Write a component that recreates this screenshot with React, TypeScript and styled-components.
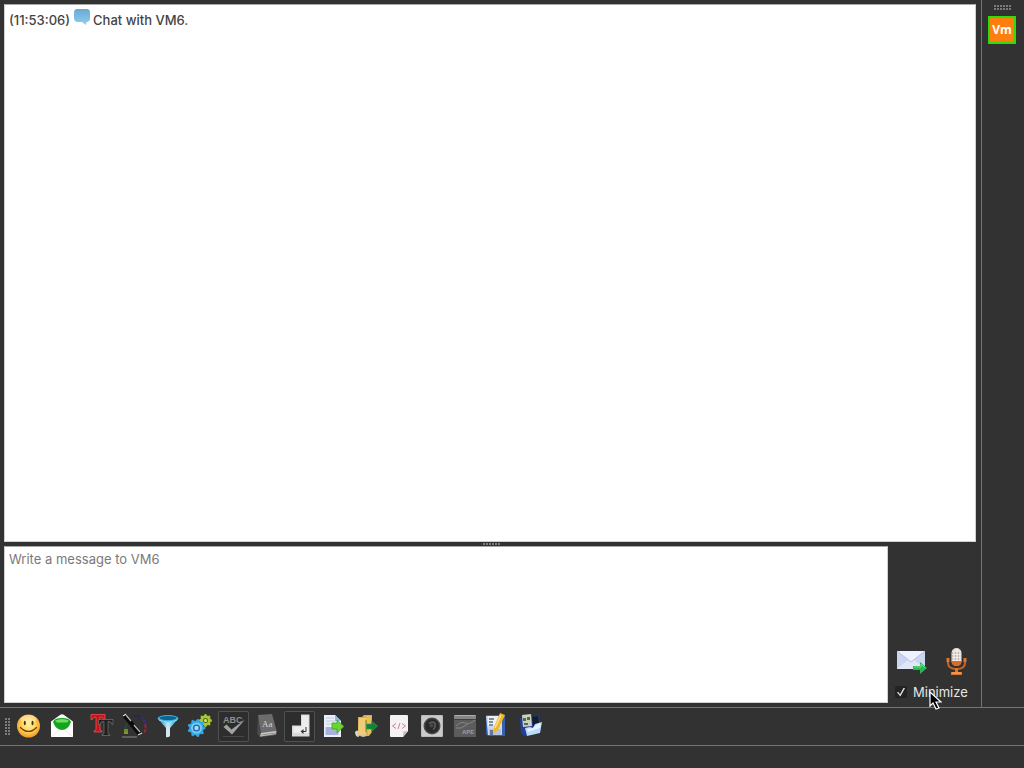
import React from "react";
import styled, { createGlobalStyle } from "styled-components";

const GlobalStyle = createGlobalStyle`
  * { box-sizing: border-box; }
  body {
    margin: 0;
    background: #323232;
    font-family: Inter, "Liberation Sans", sans-serif;
    font-size: 13px;
    line-height: 16px;
  }
`;

const Window = styled.div`
  display: flex;
  flex-direction: column;
  min-height: 100vh;
`;

const Body = styled.div`
  display: flex;
  flex: 1;
`;

const Conversation = styled.main`
  display: flex;
  flex-direction: column;
  flex: 1;
  min-width: 0;
  padding: 4px 5px 4px 4px;
`;

const ChatLog = styled.section`
  flex: 1;
  padding: 4px;
  background: #fff;
  border: 1px solid #cfcfcf;
  border-top-color: #a8a8a8;
  color: #444;
  font-weight: 500;
`;

const LogLine = styled.p`
  display: flex;
  align-items: center;
  margin: 0;
  height: 22px;
  white-space: pre;
`;

const Bubble = styled.svg`
  width: 16px;
  height: 16px;
  margin: 0 3px 6px 4px;
`;

const Splitter = styled.div`
  display: flex;
  justify-content: center;
  align-items: center;
  height: 4px;
  padding-left: 4px;
`;

const Composer = styled.form`
  display: flex;
  height: 157px;
`;

const MessageBox = styled.textarea`
  flex: 1;
  min-width: 0;
  padding: 4px;
  border: 1px solid #cfcfcf;
  border-top-color: #a8a8a8;
  border-radius: 0;
  outline: none;
  resize: none;
  background: #fff;
  color: #3a3a3a;
  font: inherit;
  &::placeholder { color: #7a7a7a; opacity: 1; }
`;

const Actions = styled.div`
  display: flex;
  flex-direction: column;
  justify-content: flex-end;
  width: 88px;
  padding: 0 0 1px 7px;
`;

const SendRow = styled.div`
  display: flex;
  gap: 14px;
`;

const PlainButton = styled.button`
  display: block;
  padding: 0;
  border: 0;
  background: none;
  svg { display: block; }
`;

const MinimizeLabel = styled.label`
  display: flex;
  align-items: center;
  gap: 6px;
  height: 20px;
  margin-top: 5px;
  color: #e6e6e6;
  position: relative;
`;

const Tick = styled.input`
  appearance: none;
  display: grid;
  place-items: center;
  width: 12px;
  height: 12px;
  margin: 0;
  border-radius: 2px;
  background: #232323;
  &:checked::before {
    content: "";
    width: 8px;
    height: 9px;
    background: #ddd;
    clip-path: polygon(0 56%, 14% 46%, 38% 76%, 84% 0, 100% 8%, 42% 100%);
  }
`;

const Pointer = styled.svg`
  position: absolute;
  left: 33px;
  top: 9px;
  width: 14px;
  height: 20px;
  pointer-events: none;
`;

const Contacts = styled.aside`
  display: flex;
  flex-direction: column;
  align-items: center;
  gap: 5px;
  width: 43px;
  padding-top: 5px;
  border-left: 1px solid #757575;
`;

const ContactTab = styled.button`
  width: 28px;
  height: 28px;
  margin-right: 2px;
  padding: 0;
  border: 2px solid #2fdc0a;
  background: #ff7f0e;
  color: #fff;
  font: 700 12px/22px "Open Sans", sans-serif;
`;

const Toolbar = styled.nav`
  display: flex;
  align-items: center;
  gap: 2px;
  height: 39px;
  padding-left: 5px;
  border-top: 1px solid #757575;
  border-bottom: 1px solid #757575;
`;

const Tool = styled.button<{ $active?: boolean; $group?: boolean }>`
  flex: none;
  width: 31px;
  height: 31px;
  margin-left: ${(p) => (p.$group ? 7 : 0)}px;
  padding: 0;
  border: 0;
  border-radius: 2px;
  background: ${(p) => (p.$active ? "#2d2d2d" : "none")};
  box-shadow: ${(p) => (p.$active ? "inset 0 0 0 1px #505050" : "none")};
  svg { display: block; width: 31px; height: 31px; }
`;

const StatusBar = styled.footer`
  height: 22px;
`;

function Grip({ cols, rows }: { cols: number; rows: number }) {
  return (
    <svg width={cols * 3} height={rows * 3} aria-hidden="true">
      {Array.from({ length: cols * rows }, (_, i) => (
        <rect key={i} x={(i % cols) * 3} y={Math.floor(i / cols) * 3} width="2" height="2" fill="#7c7c7c" />
      ))}
    </svg>
  );
}

const gear = (cx: number, cy: number, r: number, teeth: number) =>
  Array.from({ length: teeth * 4 }, (_, i) => {
    const a = ((i - 0.5) / (teeth * 4)) * Math.PI * 2;
    const d = i % 4 < 2 ? r : r * 0.8;
    return `${cx + Math.cos(a) * d},${cy + Math.sin(a) * d}`;
  }).join(" ");

const Smile = () => (
  <svg viewBox="0 0 31 31">
    <defs>
      <radialGradient id="face" cx="50%" cy="45%" r="55%">
        <stop offset="0" stopColor="#fff3a0" />
        <stop offset=".55" stopColor="#ffd45a" />
        <stop offset="1" stopColor="#f29a22" />
      </radialGradient>
    </defs>
    <circle cx="15.5" cy="15" r="11.5" fill="url(#face)" />
    <ellipse cx="15.5" cy="8" rx="8" ry="4" fill="#fff" opacity=".35" />
    <ellipse cx="11.8" cy="12" rx="1" ry="2.2" fill="#4a2d08" />
    <ellipse cx="19.5" cy="12" rx="1" ry="2.2" fill="#4a2d08" />
    <path d="M7.5 16.500q8 8 16 0" fill="none" stroke="#6b3d0a" strokeWidth="1.200" strokeLinecap="round" />
  </svg>
);

const OpenMail = () => (
  <svg viewBox="0 0 31 31">
    <path d="M5 10.500 14 4q2-1.500 4 0l9 6.500V26H5z" fill="#fff" />
    <path d="M7 11q1-4 9-4t9 4q-3 8-9 8t-9-8" fill="#14a51e" />
    <path d="M9 9.500q7-3 14 0l-2 2H11z" fill="#6fdc62" />
    <path d="m5 26 8-7m14 7-8-7" stroke="#e4eae4" fill="none" />
  </svg>
);

const Fonts = () => (
  <svg viewBox="0 0 31 31">
    <path d="M5 3.500h14v5h-1.500q-.5-2.500-3-2.500H14v12q0 2 2 2v1H8v-1q2 0 2-2V6h-.5Q7 6 6.500 8.500H5z" fill="#c3141c" stroke="#ff5656" strokeWidth=".7" />
    <path d="M12.500 8.500h14.500v5h-1q-.5-3-3-3h-1v11.500q0 1.500 2 1.500v1h-8v-1q2 0 2-1.500V10.500h-1q-2.500 0-3 3h-1.500z" fill="#202020" stroke="#767676" strokeWidth=".7" />
  </svg>
);

const Wand = () => (
  <svg viewBox="0 0 31 31">
    <path d="M3 26h15" stroke="#8a8a8a" />
    <path d="M15 5q4-1 7 2" stroke="#29294a" strokeWidth="2" fill="none" />
    <path d="M22 6q3 2 4 6" stroke="#3d2a80" strokeWidth="2" fill="none" strokeDasharray="3 1" />
    <path d="M26 13q2 5-1 9" stroke="#a01f3f" strokeWidth="2" fill="none" strokeDasharray="4 1" />
    <path d="M8 12 6 18" stroke="#2c4a2a" strokeWidth="2" />
    <path d="M5 18h4v3H5z" fill="#4c9e2e" />
    <path d="M5 21h4v2H5z" fill="#a0882a" />
    <path d="m6 5 14 17" stroke="#0c0c0c" strokeWidth="4.500" strokeLinecap="round" />
    <path d="m7 4 5 6m3 4 6 7" stroke="#bcbcbc" strokeWidth="1.200" />
    <path d="m4 5 3-2m12 21 4-2" stroke="#ddd" strokeWidth="1.300" />
  </svg>
);

const Funnel = () => (
  <svg viewBox="0 0 31 31">
    <defs>
      <linearGradient id="cone">
        <stop stopColor="#1675a9" />
        <stop offset=".5" stopColor="#c5edfa" />
        <stop offset="1" stopColor="#1688c2" />
      </linearGradient>
    </defs>
    <path d="m6 8 8 9v9q2 1 4-1v-8l8-9z" fill="url(#cone)" />
    <path d="M14 16h4v9l-4 1z" fill="#d7e5ee" />
    <ellipse cx="16" cy="7.500" rx="10.500" ry="3.500" fill="#3fb2df" />
    <ellipse cx="16" cy="7" rx="8.500" ry="2" fill="#0e628f" />
    <path d="M7 9q9 4 18 0" stroke="#8bddf8" fill="none" />
  </svg>
);

const Gears = () => (
  <svg viewBox="0 0 31 31">
    <polygon points={gear(20.5, 9.5, 6.5, 8)} fill="#a7c62f" />
    <circle cx="20.500" cy="9.500" r="2.500" fill="#53701b" />
    <circle cx="20.500" cy="9.500" r="1.500" fill="#d8e68a" />
    <polygon points={gear(11.5, 17, 9, 9)} fill="#35a7e8" />
    <circle cx="11.500" cy="17" r="5.500" fill="#76caf5" />
    <circle cx="11.500" cy="17" r="3.500" fill="#1b68a2" />
    <circle cx="11.500" cy="17" r="2.200" fill="#a6dcf7" />
  </svg>
);

const Spelling = () => (
  <svg viewBox="0 0 31 31">
    <text x="5" y="12" fontFamily="Liberation Sans, sans-serif" fontSize="9" fontWeight="700" fill="#8f8f8f">ABC</text>
    <path d="m5.500 16 3-2.500 5 5L27 8.500 14 23.500z" fill="#a2a2a2" />
    <path d="M5 25.500h21" stroke="#484848" />
  </svg>
);

const Dictionary = () => (
  <svg viewBox="0 0 31 31">
    <path d="m7 4 14-1 5 18-1 3-16 2-1-4z" fill="#6c6c6c" />
    <path d="m7 4 3 18-1 4-3-3z" fill="#494949" />
    <path d="m10 22 15-2v3L9 25.500z" fill="#c9c9c9" />
    <path d="m10 24 15-2" stroke="#777" strokeWidth=".7" />
    <text x="11" y="16" fontFamily="Liberation Serif, serif" fontSize="9" fill="#d6d6d6">Aa</text>
  </svg>
);

const EnterKey = () => (
  <svg viewBox="0 0 31 31">
    <path d="M17 3.500h8.500v22H8V14.500h9z" fill="#d9d9d9" />
    <path d="M18 4.500h6.500V22H9.500v-6.500H18z" fill="#ededed" />
    <path d="M22 16v4.500h-3" stroke="#333" fill="none" />
    <path d="m16.500 20.500 3-2.500v5z" fill="#333" />
  </svg>
);

const SendFile = () => (
  <svg viewBox="0 0 31 31">
    <path d="M7 4h11l6 6v16H7z" fill="#e9effb" />
    <path d="M9 7h8M9 10h9M9 13h6" stroke="#c3ccda" />
    <path d="M8.500 16h13v8h-13z" fill="#a6b2dc" />
    <path d="M18 4v6h6z" fill="#8db9d5" />
    <path d="M15 12h5V9l7 6.500-7 6.500v-4h-5z" fill="#6ad52c" stroke="#379c16" strokeWidth=".7" />
  </svg>
);

const SendFolder = () => (
  <svg viewBox="0 0 31 31">
    <path d="M8 6h4l2-2h8v17l-3 4H8z" fill="#d9ad48" />
    <path d="M9 7h7v17H8z" fill="#efcc78" />
    <path d="M16 5h5v17l-3 2z" fill="#e8bf5c" />
    <path d="M16 9v12" stroke="#98701d" />
    <path d="M5 21q2-3 4 0l-1 2 1 3q-4 0-4-5" fill="#d8d3c5" />
    <path d="m10 25 5-3 2 3-4 1z" fill="#ccc6b5" />
    <path d="M16.500 13h5v-3l6 5-6 5.500V18h-5z" fill="#16803a" stroke="#2c9d4c" strokeWidth=".7" />
  </svg>
);

const Source = () => (
  <svg viewBox="0 0 31 31">
    <path d="M8 4h16q1 0 1 1v15l-5 6H8q-1 0-1-1V5q0-1 1-1" fill="#f4f2f3" />
    <path d="M20 26v-4q0-2 2-2h3z" fill="#c8c5c6" />
    <path d="m13 12.500-3.500 2.500 3.500 2.500m6-5 3.500 2.500-3.500 2.500m-2-5.500-2 6" fill="none" stroke="#d47e88" />
  </svg>
);

const Buzz = () => (
  <svg viewBox="0 0 31 31">
    <rect x="5" y="4" width="22" height="22" rx="1" fill="#b9b9b9" />
    <rect x="6" y="5" width="20" height="20" fill="#cbcbcb" />
    <circle cx="16" cy="15" r="8.500" fill="#4b4b4b" />
    <circle cx="16" cy="15" r="7" fill="#292929" />
    <path d="M13 12.500q4-3 6 0 1 4-2 6" stroke="#626262" strokeWidth="1.500" fill="none" />
    <circle cx="15.500" cy="14.500" r="2" fill="#484848" />
  </svg>
);

const Screenshot = () => (
  <svg viewBox="0 0 31 31">
    <rect x="5" y="4" width="22" height="22" fill="#5c5c5c" />
    <path d="M5 4h22v4H5z" fill="#858585" />
    <path d="M6 4.500h20" stroke="#b0b0b0" />
    <path d="M5 8.500h22" stroke="#404040" />
    <path d="M7 15q5-5 9-3t10-3M7 17h5l7-4" stroke="#858585" fill="none" />
    <text x="13" y="23" fontFamily="Liberation Sans, sans-serif" fontSize="6" fontWeight="700" fill="#9c9c9c">APE</text>
  </svg>
);

const Notes = () => (
  <svg viewBox="0 0 31 31">
    <path d="M4 4h19v21H6l-2-2z" fill="#3460ad" />
    <path d="M4 5h16v19H6z" fill="#cdd8eb" />
    <path d="M6 5h13v10H6z" fill="#edf1f5" />
    <path d="M7 8h5m-5 3h4m-4 3h4" stroke="#586a7e" strokeWidth="1.300" />
    <path d="M7 18h12v6H7z" fill="#b5c4dc" />
    <path d="M8 19h3v5H8z" fill="#62769e" />
    <path d="m18 2 5 2-7 15-4 3v-6z" fill="#efb52d" />
    <path d="m19 4-6 13" stroke="#ffe28a" strokeWidth="1.500" />
  </svg>
);

const SaveLog = () => (
  <svg viewBox="0 0 31 31">
    <path d="m5 7 19-2 2 15-17 5-3-3z" fill="#233f9c" />
    <path d="m7 4 9-1 1 12-9 1z" fill="#c9d0bd" />
    <path d="M8 7h3v3H8zm4-1h3v3h-3zm-3 6h4v2H9z" fill="#59674e" />
    <path d="m17 6 6-1 1 7-6 3z" fill="#151c2a" />
    <path d="m10 17 5-1 3 1 2-4 7-2-2 11-13 3z" fill="#b9dbfa" />
    <path d="m12 18 6-1 3-3 5-2-1 5-12 4z" fill="#e4f3ff" />
  </svg>
);

const tools: { name: string; Icon: () => React.JSX.Element; active?: boolean; group?: boolean }[] = [
  { name: "Smileys", Icon: Smile },
  { name: "Open message", Icon: OpenMail },
  { name: "Font", Icon: Fonts, group: true },
  { name: "Colour", Icon: Wand },
  { name: "Filter", Icon: Funnel },
  { name: "Settings", Icon: Gears },
  { name: "Spell check", Icon: Spelling, active: true },
  { name: "Dictionary", Icon: Dictionary },
  { name: "Send with Enter", Icon: EnterKey, active: true },
  { name: "Send file", Icon: SendFile },
  { name: "Send folder", Icon: SendFolder },
  { name: "Source code", Icon: Source },
  { name: "Buzz", Icon: Buzz },
  { name: "Screenshot", Icon: Screenshot },
  { name: "Notes", Icon: Notes },
  { name: "Save chat", Icon: SaveLog },
];

const SendIcon = () => (
  <svg width="32" height="30" viewBox="0 0 32 30">
    <path d="M2 4h28v18H2z" fill="#ccd5ef" />
    <path d="m2 4 14 11L30 4z" fill="#eef2ff" />
    <path d="m2 22 11-9 3 2 3-2 11 9z" fill="#e0e6f8" />
    <path d="m2 4 14 11L30 4" fill="none" stroke="#b3bfe4" />
    <path d="M18 19h7v-4l7 6-7 6v-4h-7z" fill="#2ab650" />
    <path d="M19 20h7v-3l4 4" fill="none" stroke="#6ee086" />
  </svg>
);

const MicIcon = () => (
  <svg width="30" height="30" viewBox="0 0 30 30">
    <path d="M7 12v4q0 6 8.500 6t8.500-6v-4" fill="none" stroke="#c66522" strokeWidth="2" />
    <path d="M5.500 11h3v4h-3zm17 0h3v4h-3zM14 21h3v4h4v3H10v-3h4z" fill="#db772e" />
    <rect x="10.500" y="1" width="10" height="18" rx="5" fill="#e7dfdc" />
    <path d="M10.500 6h10m-10 3h10m-10 3h10" stroke="#b08d7e" />
    <path d="M13 4v10m3-12v12m3-10v10" stroke="#fff" />
    <path d="M10.500 14h10q0 5-5 5t-5-5" fill="#d76c28" />
    <path d="M11 26h9" stroke="#ffb068" />
  </svg>
);

export default function App() {
  return (
    <Window>
      <GlobalStyle />
      <Body>
        <Conversation>
          <ChatLog>
            <LogLine>
              <span>(11:53:06)</span>
              <Bubble viewBox="0 0 16 16" aria-hidden="true">
                <defs>
                  <linearGradient id="bubble" x2="0" y2="1">
                    <stop stopColor="#68a9d5" />
                    <stop offset="1" stopColor="#91cdef" />
                  </linearGradient>
                </defs>
                <path d="M3 0h10q3 0 3 4v5q0 4-3.500 4l-.5 3-4-3H4q-4 0-4-4V4q0-4 3-4" fill="url(#bubble)" />
              </Bubble>
              <span>Chat with VM6.</span>
            </LogLine>
          </ChatLog>
          <Splitter><Grip cols={6} rows={1} /></Splitter>
          <Composer onSubmit={(e) => e.preventDefault()}>
            <MessageBox aria-label="Message" placeholder="Write a message to VM6" />
            <Actions>
              <SendRow>
                <PlainButton type="submit" aria-label="Send"><SendIcon /></PlainButton>
                <PlainButton type="button" aria-label="Record voice"><MicIcon /></PlainButton>
              </SendRow>
              <MinimizeLabel>
                <Tick type="checkbox" defaultChecked />
                Minimize
                <Pointer viewBox="0 0 14 20" aria-hidden="true">
                  <path d="M2 1v14l3-3 3 6 3-1-3-6h5z" fill="#000" stroke="#fff" strokeWidth="1.200" />
                </Pointer>
              </MinimizeLabel>
            </Actions>
          </Composer>
        </Conversation>
        <Contacts>
          <Grip cols={6} rows={2} />
          <ContactTab type="button">Vm</ContactTab>
        </Contacts>
      </Body>
      <Toolbar aria-label="Chat tools">
        <Grip cols={2} rows={6} />
        {tools.map(({ name, Icon, active, group }) => (
          <Tool key={name} type="button" aria-label={name} $active={active} $group={group}>
            <Icon />
          </Tool>
        ))}
      </Toolbar>
      <StatusBar />
    </Window>
  );
}
